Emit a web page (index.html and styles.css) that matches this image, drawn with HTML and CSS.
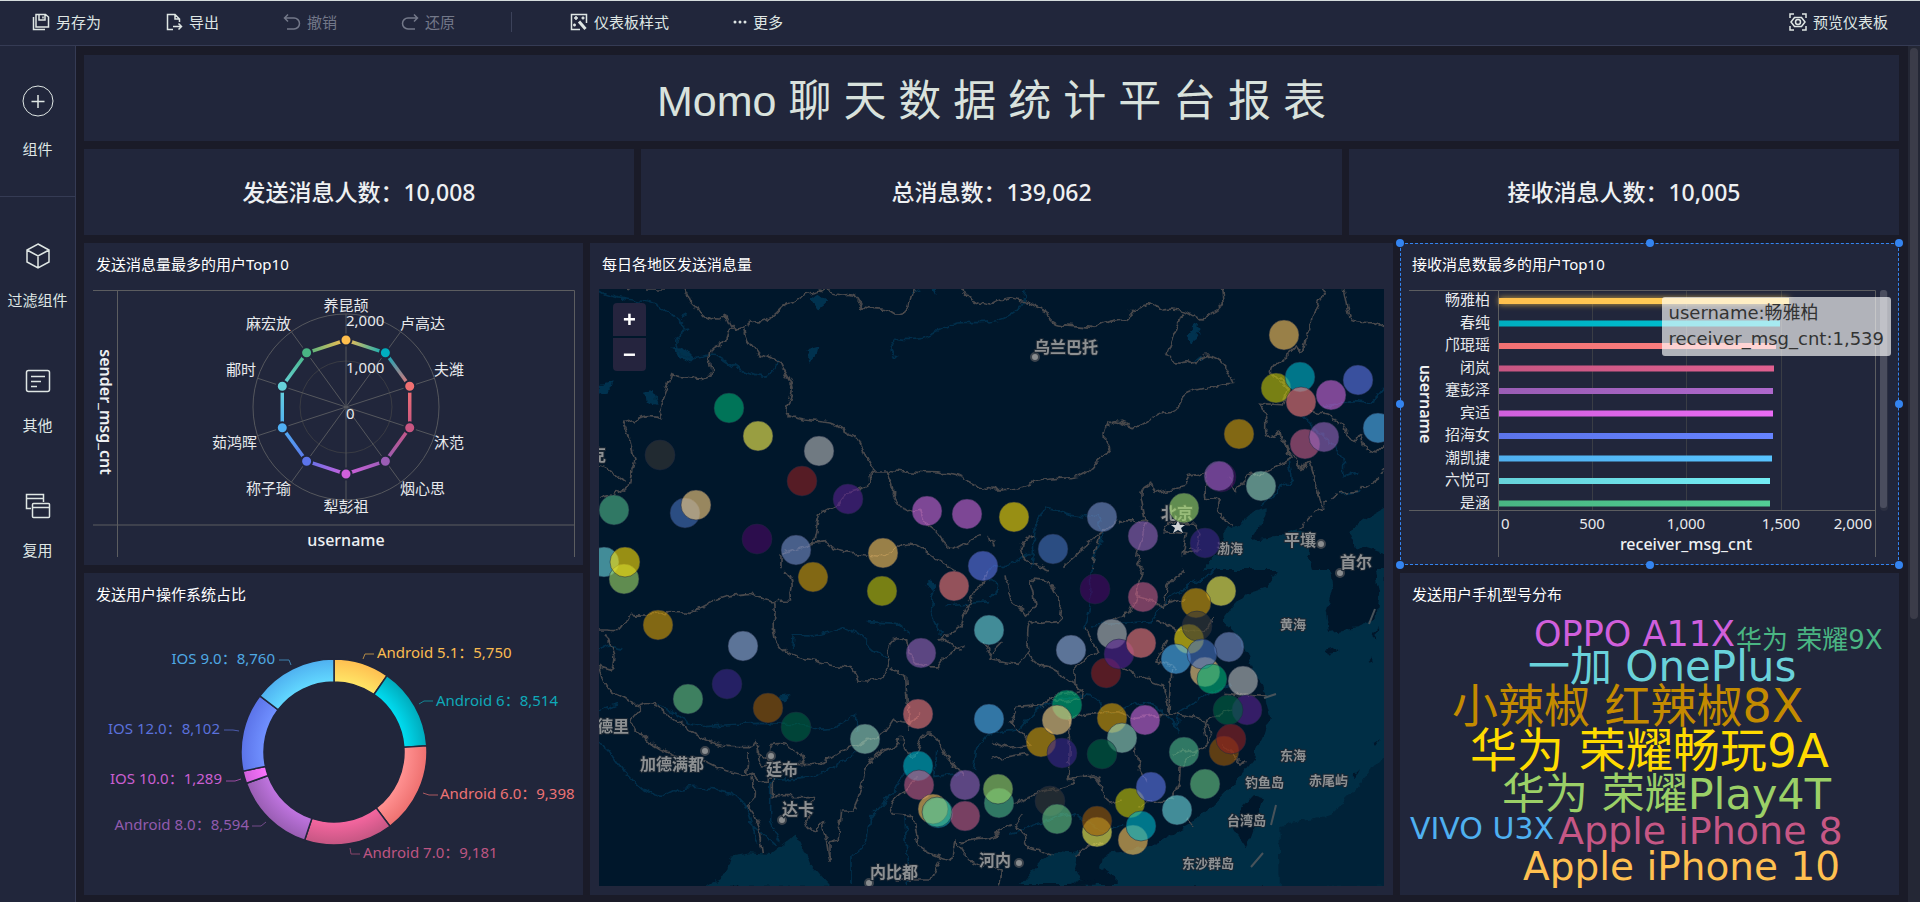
FILE: index.html
```html
<!DOCTYPE html>
<html lang="zh-CN">
<head>
<meta charset="utf-8">
<title>Momo 聊天数据统计平台报表</title>
<link rel="stylesheet" href="styles.css">
</head>
<body>
<div class="app">
  <header class="toolbar">
    <button class="tool"><svg class="tool-icon" viewBox="0 0 18 18"><path d="M4 1.500h9.500l3 2.500V14H4zM7 2v5h6V2M11 3.500v2M1.500 4v12.500H13"/></svg>另存为</button>
    <button class="tool"><svg class="tool-icon" viewBox="0 0 18 18"><path d="M8 16.500H2.500v-15H10l4.500 4.500v3M10 1.500V6h4M8 13.500h8M13.500 10.500l3 3-3 3"/></svg>导出</button>
    <button class="tool" disabled><svg class="tool-icon" viewBox="0 0 18 18"><path d="M5 1.500L1.500 5 5 8.500M1.500 5H11a5.500 5.500 0 0 1 0 11H4"/></svg>撤销</button>
    <button class="tool" disabled><svg class="tool-icon" viewBox="0 0 18 18"><path d="M13 1.500L16.500 5 13 8.500M16.500 5H7a5.500 5.500 0 0 0 0 11h7"/></svg>还原</button>
    <span class="tool-divider"></span>
    <button class="tool"><svg class="tool-icon" viewBox="0 0 18 18"><path d="M10 16.500H1.500v-15h15V10M6 3v4M4 5h4M13 3.500v3M11.500 5h3M4.500 10.500v3M3 12h3"/><path class="thick" d="M9 8.500l6.500 7.500"/></svg>仪表板样式</button>
    <button class="tool"><svg class="more-icon" viewBox="0 0 14 18"><circle cx="2" cy="9" r="1.500"/><circle cx="7" cy="9" r="1.500"/><circle cx="12" cy="9" r="1.500"/></svg>更多</button>
    <button class="tool tool-preview"><svg class="tool-icon" viewBox="0 0 18 18"><path d="M1 5V1h4M13 1h4v4M17 13v4h-4M5 17H1v-4M2 9l3.500-4.500h7L16 9l-3.500 4.500h-7z"/><circle cx="9" cy="9" r="2.500"/></svg>预览仪表板</button>
  </header>

  <div class="workspace">
    <nav class="sidebar">
      <button class="side side-main"><svg class="side-plus" viewBox="0 0 32 32"><circle cx="16" cy="16" r="15"/><path d="M16 10v13M9.500 16.500h13"/></svg>组件</button>
      <button class="side"><svg class="side-icon" viewBox="0 0 26 26"><path d="M13 1l11 6v12l-11 6-11-6V7zM2 7l11 6 11-6M13 13v12"/></svg>过滤组件</button>
      <button class="side"><svg class="side-icon" viewBox="0 0 26 26"><rect x="1.500" y="2.500" width="23" height="21" rx="2"/><path d="M6 8.500h14M6 13.500h10M6 18.500h6"/></svg>其他</button>
      <button class="side"><svg class="side-icon" viewBox="0 0 26 26"><path d="M6 15.500H1.500v-14h17V9M1.500 5.500h17"/><rect x="7.500" y="10.500" width="17" height="14" rx="1"/><path d="M7.500 14.500h17"/></svg>复用</button>
    </nav>

    <main class="canvas">
      <section class="card heading"><h1>Momo 聊 天 数 据 统 计 平 台 报 表</h1></section>

      <div class="stats">
        <section class="card stat stat-side">发送消息人数：10,008</section>
        <section class="card stat stat-mid">总消息数：139,062</section>
        <section class="card stat stat-side">接收消息人数：10,005</section>
      </div>

      <div class="charts">
        <div class="column">
          <section class="card">
            <h2>发送消息量最多的用户Top10</h2>
            <svg class="chart" viewBox="0 0 499 275">
              <g class="frame"><path d="M9 .5H490.500V267M33.500 .5V267M9 235H490"/></g>
              <g class="spokes" id="radar-grid"></g>
              <g id="radar-data"></g>
              <g class="label middle">
                <text x="262" y="21">养昆颉</text><text x="262" y="222">犁彭祖</text>
              </g>
              <g class="label">
                <text x="316" y="39">卢高达</text><text x="350" y="85">夫潍</text><text x="350" y="158">沐范</text><text x="316" y="204">烟心思</text>
                <text x="262" y="36">2,000</text><text x="262" y="83">1,000</text><text x="262" y="129">0</text>
              </g>
              <g class="label end">
                <text x="207" y="39">麻宏放</text><text x="172" y="85">郙时</text><text x="173" y="158">茹鸿晖</text><text x="207" y="204">称子瑜</text>
              </g>
              <text class="axis-name middle" x="262" y="256">username</text>
              <text class="axis-name strong middle" transform="translate(16 122) rotate(90)">sender_msg_cnt</text>
            </svg>
          </section>
          <section class="card">
            <h2>发送用户操作系统占比</h2>
            <svg class="chart" viewBox="0 0 499 275">
              <defs id="donut-fills"></defs>
              <g id="donut"></g>
              <g class="leaders">
                <path stroke="#b48a45" d="M279 39l2-5h9"/><path stroke="#138594" d="M335 84l5-3h9"/>
                <path stroke="#ac5961" d="M339 173l6 2h9"/><path stroke="#89446a" d="M266 228l1 6h9"/>
                <path stroke="#754b8b" d="M182 202l-5 4h-9"/><path stroke="#9b4ba2" d="M157 159l-6 2h-9"/>
                <path stroke="#4b5aac" d="M155 111l-6-1h-9"/><path stroke="#3f80ae" d="M207 45l-2-5h-10"/>
              </g>
              <g class="pie-label">
                <text x="293" y="38" fill="#fbbc50">Android 5.1：5,750</text>
                <text x="352" y="86" fill="#0fa9b8">Android 6：8,514</text>
                <text x="356" y="179" fill="#ed7375">Android 6.0：9,398</text>
                <text x="279" y="238" fill="#bd5582">Android 7.0：9,181</text>
              </g>
              <g class="pie-label end">
                <text x="165" y="210" fill="#925bae">Android 8.0：8,594</text>
                <text x="138" y="164" fill="#ca5fd2">IOS 10.0：1,289</text>
                <text x="136" y="114" fill="#5b71dc">IOS 12.0：8,102</text>
                <text x="191" y="44" fill="#4fa9e4">IOS 9.0：8,760</text>
              </g>
            </svg>
          </section>
        </div>

        <section class="card column-map">
          <h2>每日各地区发送消息量</h2>
          <div class="map">
            <svg class="map-view" viewBox="0 0 785 597" preserveAspectRatio="xMidYMid slice">
              <defs>
                <filter id="rough" filterUnits="userSpaceOnUse" x="-20" y="-20" width="830" height="640">
                  <feTurbulence type="fractalNoise" baseFrequency="0.09" numOctaves="3" seed="4"/>
                  <feDisplacementMap in="SourceGraphic" scale="9" xChannelSelector="R" yChannelSelector="G"/>
                </filter>
              </defs>
              <g filter="url(#rough)">
                <!-- north-west -->
                <g transform="translate(-9 -49) scale(.3333)">
                  <path class="lake" d="M660 175l20-15 35 25-30 25zM650 330l38-10-5 20-25 28zM238 330l30-5 50 25-15 15zM25 435l40-8-8 25-30 10zM165 455l20-5 15 45-30-10zM1020 140h25l-10 30z"/>
                  <path class="river" d="M25 150c60 40 120 20 170 45s60 35 100 70c-40 25-45 40-30 70 40 30 60 15 90 10 50 0 60 40 120 55 60 25 70 10 90-40M270 235l20-10M1200 245c-60 10-90-10-140 20-60 30-70 40-140 30-25 10-30 50 5 53M960 160l25-10"/>
                  <path class="border" d="M100 140l20 5M165 150h60M275 140c25 20 10 45 50 65 20 35 40 35 60 35l25-15c10 25 15 35 30 45 60-10 20-25 70-25 60-15 50-45 100-60 30-20 60-30 80-35l60 15c40-5 50 0 65 35 50 15 60-5 100 25 50 0 40-45 55-75M1115 140c10 50 50 50 85 55M430 268c-30-10-15 40-45 45-50 15-15 60-25 95-20 5-10 15-40 8-50-10-50 0-75-15l-40 110 15 25c-50-15-70 0-120 15 25 40 20 75 35 110-20 50-10 70-20 75-60 45-50 15-85 40M25 680c40 10 50 25 80 45M460 265c10 50 20 40 40 75 50 20 40 10 70 30 20 50 50 60 30 110-30 50 0 50 40 60 80 10 80 0 125 35l40 20c20 35 20 70 45 95h40c60 10 100 5 160 10 80 0 80 50 190 50M850 690c-30 10 5 40-20 50-50 15-60 10-85 50l-55 30c-10 30-10 60-20 90l-100 35v40M890 690c10 30 25 50 20 80l30 45 50-10 20 50c50 30 40 60 85 75l80-45M670 910l35-5c50 45 100 35 170 45l50-30c40-20 60 0 100 30l70 40"/>
                </g>
                <!-- south-west -->
                <g transform="translate(-9 281) scale(.3333)">
                  <path class="sea" d="M345 950l55-30 20-60 60-10 60 5 70-55 25 15 25 65 65 70z"/>
                  <path class="lake" d="M1000 40l20-12 25 22-15 12zM570 380l35-5-20 20z"/>
                  <path class="river" d="M25 250c30-40 40-20 70-15M25 425l60-25M200 405c80 20 60 60 150 65 80-10 100-5 150-10l150 5c70 25 110-5 150-30v50M605 240l5-45c90 10 100-10 150-25 60 20 60 50 135 100M830 155l90 5 40 30M1040 60c-30 40-20 90 20 130M1200 95l-130 10M25 520c60 20 80 150 200 160 80-50 120-20 200-10 50 20 60 80 75 150M545 630v130l30 60M550 630c70-10 130 10 240-80M480 760l80 70M950 600c-30 60-70 100-110 140-10 60 0 90-60 120v80M945 740l10 200M1040 540l-5 80 80-10M1150 600l10-60 40-50"/>
                  <path class="border" d="M25 180h30c50 10 40-20 65-50 60 10 80-10 180 0 100-50 80-50 180-60l70 25c10 40-10 50 5 110 30 70 100 60 140 75 60 20 90-10 110 50 60 10 80 0 95-55-20-60 20-90 50-60 10 60 40 80 95 75l30-40 50-20M605 95c-10-30 20-50-20-90M540 95l65-2M45 190c20 40 40 80 15 110l-30-10c20 80 30 70 70 90 40 20 30 40 50 30 40-20 60 10 90 30 60 40 120 90 190 90h50l20-12c10 60 30 70 150 65 70 10 90-50 150-55 80-50 60 0 110-80 60 30 60-5 80-20M150 415l-35 40c60 60 90 90 160 110 80-10 90 40 195 50l15-5c30 30 40 20 65 20v50h120l-20 75c20 60 40 0 50 0l20 120v-60l25-5 10-90h35c40-80 20-100 50-150 40-40 90-30 85-60M475 540l-5 70M485 610c-10 60 40 50-15 95 40 40 40 80 50 145M505 540c0 60 10 50 30 45l5-60c40-10 60 0 85 20l25 45M930 500c10 40 25 70 50 50 20-100 60-60 80 0l60 70M960 480l-10-160-45-30M980 620c-20 50-100 50-70 115l60 5 15 85c50 40 60 30 100 45l10-60c40 60 40 70 90 80M1050 870l-30 60h-100M1200 0l-60 90-35 90-50 20 60 50M1110 815l90-15"/>
                </g>
                <!-- north-east -->
                <g transform="translate(391 -49) scale(.3333)">
                  <path class="sea" d="M790 815l40-10v20l-50 75 80-10 60-25 40 35-5 40 15 50H635l30-35 35-20v-55l45-25zM1190 800l-60 35-55 40 15 40 100 30z"/>
                  <path class="lake" d="M590 290l30-38 12 15-28 44zM610 365l20-15 5 12z"/>
                  <path class="river" d="M105 148c0 60-50 90-105 98M120 990c30-80-20-120 50-185 60 10 80 30 150 20l20 60-40 100M0 990l125-50M1190 440c-50 60-50 50-100 45l-90 20M940 530l60 60c80 60 50 80 60 120l45-15M1055 760l60-10M900 650c-20 30 30 70-20 85l-70 65"/>
                  <path class="border" d="M0 195c80-50 110 0 170 20 20 60 60 30 140 50 70-40 90-10 120-55 60-30 50-20 90 0 60-10 70 10 110 30 60-30 60-30 70-50l-5-40 15-10M578 218l-50 125c30 50 60 0 90 30 30-50 90-20 110 60-70 5-80 10-120 20-60 10-20 60-75 65-40 0-50 30-100 45-40-10-80-50-90 20-10 40 60 30-20 80-50 70-80 40-180 60-50 20-70 30-140 25M1000 148c-20 80-40 50-35 120-30 10-10 60-35 70l-15-20c-10 30-80 50-70 80l50 50-15 50-70-5c30 40 10 70 20 100l40-15 30 80-60 30c-70 20-60 10-105 70l-20-50M1060 148c20 80 0 100 80 100l45 20M960 510c40 15 50 0 70 30 50 10 20 60 70 65 30-60 10 50 50 35l35-30M905 650l25 35 30-20 25 85 10 55M900 650l-15-50M595 710l50-10 5 75 40 5-10 30 45 50M595 710l-15 30-85 20-10-30c-50 20-30 40-20 110-60 10-70-10-80 15M520 860c30-30 60-10 90-10l20 30-10 50-40 10 10-60-70-5zM470 840l-30 110 20 40M600 920l30 15M380 840l-60 50-100 90M0 890l10 30M130 890c-60 20-30 60-10 75l60 25"/>
                  <path class="border dashed" d="M1185 690l-20 25-60 35-60 10c-30 20-60 60-80 70l-40 40M330 890l-30 100"/>
                </g>
                <!-- south-east -->
                <g transform="translate(391 281) scale(.3333)">
                  <path class="sea" d="M850 20l-20 30-60 20-40 40-30 40 35 35 35 65 20 60 30 35 10 60 10 40-20 60-30 60-30 40-40 50-60 60-60 50-60 35-60 30-80 15-40 5-25 15-5 30 50 30v20H90l60-70 50-30 45 5 20-5-10 55 30 55H1190V0H860z"/>
                  <path class="deep" d="M865 765l150-25 80-80 95-120v410H870z"/>
                  <path class="land" d="M1020 0l10 60-20 60 10 65 80-10 60-40 10-70-15-70zM795 672l25 8-8 40-42 115-35-55 15-60zM235 945l30-15 55 10v10h-85zM1010 240l30-8 5 12-28 10zM1130 285l20-20v15zM1150 520l20-12-15 20zM1085 620l25-25-15 28zM1150 195l12-25-3 35z"/>
                  <path class="river" d="M0 80c30-20 30-40 0-50M285 180c20-80 20-100 15-180M310 165l170-10 60-70 140-85M0 490l90-15c60-80 110-80 180-100 50-5 60 20 80 60 80-20 90-60 150-20l60 50 10-40 60-40 90-40M545 450l25 40M60 790l180-60 100 50 60-10"/>
                  <path class="border" d="M45 10l20 90 45 35 25-30-15-75 60 5 30 60-5 60-50 5c-50-20-50 20-40 90l-30 30-80-10-20-50M110 250c60 60 40 20 100 60 30 40 70 40 70 70-60 20-80 20-100 0l-20 30-80 5-20 40 40 40 20 30-60 10-60-20M180 380l100-20M290 175l30 70-65 45v60M460 0l-20 80-20 50-55 15M580 0c-30 30-60 50-60 110l60-25M440 80l60 15 20 25M390 295c60 20 70 30 130 50l20 85-100 15-60-20-140 20-5 180 80-10c30 20 0 60 50 85l30-10M545 300l-5 130 100 20 10 70-80 70c0 60-10 60-25 100l-100 15M435 530l10 60 25 40M500 150l60 35 90-10 20-30M530 210l-30 60 60 30M645 450l80-30M700 370l130 10M640 450c40 40 30 60-20 90l-70 10M240 620l10 20-100 30-80 30M0 570l110-20M70 770l30-40M70 770c60 20 20 60 60 65l60 20M0 800l60-30M260 860l30-30 50-10M0 890l40 20-10 40M700 520l60 60M590 740l25 35M0 250l40-40"/>
                </g>
              </g>
              <g class="limits"><path d="M770 335l6-15M665 409l12-4M672 536l5-20M652 578l12-14"/></g>
              <g class="towns"><circle cx="436" cy="68" r="4"/><circle cx="722" cy="255" r="4"/><circle cx="741" cy="284" r="4"/><circle cx="106" cy="462" r="4"/><circle cx="172" cy="467" r="4"/><circle cx="183" cy="531" r="4"/><circle cx="270" cy="594" r="4"/><circle cx="420" cy="574" r="4"/></g>
              <g class="place">
                <text x="435" y="64">乌兰巴托</text><text x="562" y="230">北京</text><text x="685" y="257">平壤</text><text x="741" y="279">首尔</text>
                <text x="-9" y="172">克</text><text x="-2" y="443">德里</text><text x="41" y="481">加德满都</text><text x="167" y="486">廷布</text><text x="183" y="526">达卡</text><text x="271" y="589">内比都</text><text x="380" y="577">河内</text>
              </g>
              <g class="place small">
                <text x="618" y="264">渤海</text><text x="681" y="340">黄海</text><text x="681" y="471">东海</text><text x="646" y="498">钓鱼岛</text><text x="710" y="496">赤尾屿</text><text x="628" y="536">台湾岛</text>
                <text x="583" y="579">东沙群岛</text>
              </g>
              <path class="capital" d="M579 231l2 5h5l-4 3 2 5-5-3-5 3 2-5-4-3h5z"/>
              <g id="bubbles"></g>
            </svg>
            <div class="zoom">
              <button class="zoom-in" aria-label="放大">+</button>
              <button class="zoom-out" aria-label="缩小">−</button>
            </div>
          </div>
        </section>

        <div class="column">
          <section class="card selected">
            <h2>接收消息数最多的用户Top10</h2>
            <svg class="chart" viewBox="0 0 499 275">
              <defs>
                <filter id="glow" x="-5%" y="-200%" width="110%" height="500%"><feDropShadow dx="0" dy="0" stdDeviation="3" flood-color="#ffc94d" flood-opacity=".8"/></filter>
              </defs>
              <path class="grid" d="M192.500 1v219M286.500 1v219M381.500 1v219"/>
              <g class="frame"><path d="M9 .5H475.500V267M98.500 .5V267M9 220.500H475"/></g>
              <g id="bars"></g>
              <g class="label middle"><text x="192" y="239">500</text><text x="286" y="239">1,000</text><text x="381" y="239">1,500</text></g>
              <text class="label" x="101" y="239">0</text>
              <text class="label end" x="472" y="239">2,000</text>
              <text class="axis-name middle" x="286" y="260">receiver_msg_cnt</text>
              <text class="axis-name strong middle" transform="translate(20 114) rotate(90)">username</text>
              <rect class="scroll-track" x="480" y="0" width="8" height="221" rx="4"/>
              <rect class="scroll-thumb" x="480" y="0" width="7" height="218" rx="3"/>
            </svg>
            <div class="tooltip"><div>username:畅雅柏</div><div>receiver_msg_cnt:1,539</div></div>
            <i class="handle top left"></i><i class="handle top center"></i><i class="handle top right"></i>
            <i class="handle middle-row left"></i><i class="handle middle-row right"></i>
            <i class="handle bottom left"></i><i class="handle bottom center"></i><i class="handle bottom right"></i>
          </section>
          <section class="card">
            <h2>发送用户手机型号分布</h2>
            <svg class="chart cloud" viewBox="0 0 499 275">
              <text x="134" y="26" font-size="35" fill="#d05fdc">OPPO A11X</text>
              <text x="336" y="29" font-size="26" fill="#4ab583">华为 荣耀9X</text>
              <text x="128" y="61" font-size="42" fill="#6ad2da">一加 OnePlus</text>
              <text x="52" y="102" font-size="46" fill="#c48b00">小辣椒 红辣椒8X</text>
              <text x="70" y="147" font-size="47" fill="#ffdb00">华为 荣耀畅玩9A</text>
              <text x="102" y="189" font-size="43" fill="#9bd067">华为 荣耀Play4T</text>
              <text x="10" y="219" font-size="30" fill="#4fb0f0">VIVO U3X</text>
              <text x="158" y="224" font-size="38" fill="#c65785">Apple iPhone 8</text>
              <text x="123" y="260" font-size="39" fill="#ffc050">Apple iPhone 10</text>
            </svg>
          </section>
        </div>
      </div>
    </main>
    <div class="page-scroll"><div class="page-scroll-thumb"></div></div>
  </div>
</div>
<script src="charts.js"></script>
</body>
</html>
```
FILE: styles.css
```css
* { box-sizing: border-box; }

body {
  margin: 0;
  background: #1a1b28;
  color: #dfe6e4;
  font: 15px/22px "Noto Sans", "Noto Sans CJK SC", sans-serif;
}

button {
  border: 0;
  background: none;
  color: inherit;
  font: inherit;
  cursor: pointer;
}

.app {
  display: flex;
  flex-direction: column;
  height: 100vh;
  overflow: hidden;
}

/* Toolbar */
.toolbar {
  display: flex;
  align-items: center;
  flex: none;
  height: 46px;
  padding-bottom: 2px;
  border-top: 1px solid #d5dcdc;
  border-bottom: 1px solid #353b54;
  background: #21263b;
}

.tool {
  display: flex;
  align-items: center;
  gap: 6px;
  padding: 0 32px;
  white-space: nowrap;
}

.tool:disabled { color: #737889; }
.tool-preview { margin-left: auto; }

.tool-icon,
.side-icon,
.side-plus {
  fill: none;
  stroke: currentColor;
  stroke-width: 1.5;
}

.tool-icon { width: 18px; height: 18px; }
.tool-icon .thick { stroke-width: 3; }
.more-icon { width: 14px; height: 18px; fill: currentColor; }

.tool-divider {
  width: 1px;
  height: 20px;
  margin: 0 26px 0 24px;
  background: #3c425a;
}

/* Sidebar */
.workspace { display: flex; flex: 1; min-height: 0; }

.sidebar {
  flex: none;
  width: 76px;
  border-right: 1px solid #353b54;
  background: #21263b;
}

.side {
  display: flex;
  flex-direction: column;
  align-items: center;
  gap: 20px;
  width: 100%;
  padding: 46px 0 11px;
  white-space: nowrap;
}

.side-main {
  gap: 21px;
  padding: 39px 0 36px;
  border-bottom: 1px solid #353b54;
}

.side-icon { width: 26px; height: 26px; }
.side-plus { width: 32px; height: 32px; stroke-width: 1; }
.side-plus path { stroke-width: 1.5; }

/* Canvas */
.canvas {
  display: flex;
  flex: 1;
  flex-direction: column;
  gap: 8px;
  min-width: 0;
  padding: 9px 9px 7px 8px;
}

.card { position: relative; background: #21263b; }

.heading {
  display: flex;
  align-items: center;
  justify-content: center;
  flex: none;
  height: 86px;
  padding-top: 6px;
}

.heading h1 {
  margin: 0;
  color: #d9e2dd;
  font: 400 43px/60px "Liberation Sans", "Noto Sans CJK SC", sans-serif;
}

.stats { display: flex; flex: none; gap: 7px; height: 86px; }

.stat {
  display: flex;
  align-items: center;
  justify-content: center;
  color: #eef0f2;
  font-size: 23px;
  font-weight: 500;
}

.stat-side { flex: 550 1 0; }
.stat-mid { flex: 701 1 0; }

.charts {
  display: grid;
  flex: 1;
  grid-template-columns: 499fr 803fr 499fr;
  gap: 7px;
  min-height: 0;
}

.column {
  display: grid;
  grid-template-rows: 1fr 1fr;
  gap: 8px;
  min-width: 0;
  min-height: 0;
}

.column-map {
  display: flex;
  flex-direction: column;
  min-width: 0;
  min-height: 0;
  padding: 0 9px 9px;
}

.column .card {
  display: flex;
  flex-direction: column;
  min-height: 0;
}

h2 {
  flex: none;
  height: 47px;
  margin: 0;
  padding: 10px 12px;
  color: #fff;
  font-size: 15px;
  font-weight: 400;
  line-height: 22px;
}

.column-map h2 { height: 46px; padding: 10px 3px; }

.chart { display: block; flex: 1; width: 100%; min-height: 0; }

/* Chart parts */
.label { fill: #e8eaed; font-size: 15px; }
.pie-label { font-size: 15px; }
.middle { text-anchor: middle; }
.end { text-anchor: end; }
.axis-name { fill: #eef0f2; font-size: 16px; font-weight: 500; }
.axis-name.strong { font-weight: 600; }
.frame { fill: none; stroke: #5c5d60; }
.grid { fill: none; stroke: #3a3d45; }
.spokes { fill: none; stroke: #55575d; }
.leaders { fill: none; }
.scroll-track { fill: #2c3042; }
.scroll-thumb { fill: #4a4d5e; }
.cloud { font-family: "DejaVu Sans", "Noto Sans CJK SC", sans-serif; }

/* Map */
.map { position: relative; flex: 1; min-height: 0; background: #00172b; }
.map-view { display: block; width: 100%; height: 100%; }
.sea { fill: #002e45; }
.deep { fill: #002337; }
.land { fill: #00172b; }
.lake { fill: #003350; }
.river { fill: none; stroke: #002f4b; stroke-width: 5; }
.border { fill: none; stroke: #48484c; stroke-width: 5; }
.border.dashed { stroke-dasharray: 24 9; }
.limits { fill: none; stroke: #48535a; stroke-width: 2; }
.towns { fill: #8a8d8f; stroke: #3b434c; stroke-width: 2; }
.capital { fill: #d0d3d5; }

.place {
  fill: #8d9092;
  stroke: #1b2733;
  stroke-width: 2px;
  paint-order: stroke;
  font: 700 16px "Noto Sans CJK SC", sans-serif;
}

.place.small { font-size: 13px; }

.zoom {
  position: absolute;
  top: 14px;
  left: 14px;
  display: grid;
  gap: 2px;
}

.zoom button {
  width: 33px;
  height: 33px;
  padding: 0;
  background: #25243e;
  color: #fff;
  font: 700 22px/30px "Liberation Sans", sans-serif;
}

.zoom-in { border-radius: 4px 4px 0 0; }
.zoom-out { border-radius: 0 0 4px 4px; }

/* Selected card */
.selected { outline: 1px dashed #3484f0; outline-offset: -1px; }

.handle {
  position: absolute;
  width: 8px;
  height: 8px;
  border-radius: 50%;
  background: #3484f0;
}

.handle.top { top: -4px; }
.handle.bottom { bottom: -4px; }
.handle.middle-row { top: calc(50% - 4px); }
.handle.left { left: -4px; }
.handle.center { left: calc(50% - 4px); }
.handle.right { right: -4px; }

.tooltip {
  position: absolute;
  top: 54px;
  right: 8px;
  padding: 3px 7px 4px;
  border-radius: 3px;
  background: rgba(255, 255, 255, .65);
  color: #333;
  font: 18px/26px "DejaVu Sans", "Noto Sans CJK SC", sans-serif;
  white-space: nowrap;
}

/* Page scrollbar */
.page-scroll { flex: none; width: 12px; padding: 2px; background: #242735; }
.page-scroll-thumb { height: 67%; border-radius: 4px; background: #3b3c49; }
```
FILE: charts.js
```js
const NS = 'http://www.w3.org/2000/svg';

function add(parent, tag, attrs, text) {
  const node = document.createElementNS(NS, tag);
  for (const key in attrs) node.setAttribute(key, attrs[key]);
  if (text) node.textContent = text;
  parent.appendChild(node);
  return node;
}

const byId = id => document.getElementById(id);
const polar = (cx, cy, r, a) => [cx + r * Math.sin(a), cy - r * Math.cos(a)];

// Radar: ten users, outer ring is 2,000
const radarColors = ['#ffbe4d', '#00aebf', '#f17072', '#c85682', '#9a5db5', '#d060dc', '#5c74ea', '#50b0f4', '#66d2da', '#49b583'];
const cx = 262, cy = 117;
const grid = byId('radar-grid');
add(grid, 'circle', { cx, cy, r: 93 });
add(grid, 'circle', { cx, cy, r: 46, stroke: '#3a3c44' });
const points = radarColors.map((c, i) => {
  const a = i * Math.PI / 5;
  const [x, y] = polar(cx, cy, 93, a);
  add(grid, 'line', { x1: cx, y1: cy, x2: x, y2: y });
  return polar(cx, cy, 67, a);
});
const radar = byId('radar-data');
points.forEach(([x, y], i) => {
  const j = (i + 1) % 10, [x2, y2] = points[j];
  const g = add(radar, 'linearGradient', { id: 'edge' + i, gradientUnits: 'userSpaceOnUse', x1: x, y1: y, x2, y2 });
  add(g, 'stop', { offset: 0, 'stop-color': radarColors[i] });
  add(g, 'stop', { offset: 1, 'stop-color': radarColors[j] });
  add(radar, 'line', { x1: x, y1: y, x2, y2, stroke: `url(#edge${i})`, 'stroke-width': 3.5 });
});
points.forEach(([x, y], i) => add(radar, 'circle', { cx: x, cy: y, r: 5.5, fill: radarColors[i], stroke: '#21263b', 'stroke-width': 2 }));

// Donut: [value, inner colour, outer colour]
const systems = [
  [5750, '#ffe566', '#ffbe50'], [8514, '#00dcf0', '#00aabb'], [9398, '#ff9191', '#ee706f'], [9181, '#f5669f', '#c45682'],
  [8594, '#bf74df', '#985db2'], [1289, '#fb73ff', '#d060da'], [8102, '#7090ff', '#5b73e8'], [8760, '#62d8ff', '#4fb0f0']
];
const total = systems.reduce((sum, s) => sum + s[0], 0);
let angle = 0;
systems.forEach(([value, inner, outer], i) => {
  const next = angle + value / total * 2 * Math.PI;
  const g = add(byId('donut-fills'), 'radialGradient', { id: 'os' + i, gradientUnits: 'userSpaceOnUse', cx: 250, cy: 132, r: 93 });
  add(g, 'stop', { offset: .76, 'stop-color': inner });
  add(g, 'stop', { offset: 1, 'stop-color': outer });
  const p = (r, a) => polar(250, 132, r, a).map(n => n.toFixed(2)).join(' ');
  add(byId('donut'), 'path', {
    d: `M${p(93, angle)}A93 93 0 0 1 ${p(93, next)}L${p(70, next)}A70 70 0 0 0 ${p(70, angle)}Z`,
    fill: `url(#os${i})`, stroke: '#21263b', 'stroke-width': 1.5
  });
  angle = next;
});

// Bars: [user, bar length, start colour, end colour]
const users = [
  ['畅雅柏', 290, '#ffc04e', '#ffd35a'], ['春纯', 281, '#00aebf', '#00c4d6'], ['邝琨瑶', 277, '#f17072', '#ff8585'],
  ['闭岚', 275, '#c85682', '#e06090'], ['蹇彭泽', 274, '#9a5db5', '#ae68cc'], ['宾适', 274, '#d060dc', '#e96bf4'],
  ['招海女', 274, '#5c74ea', '#6683ff'], ['潮凯捷', 273, '#50b0f0', '#58c3ff'], ['六悦可', 271, '#66d2da', '#73ecf4'], ['是涵', 271, '#49b583', '#52cd95']
];
const bars = byId('bars');
users.forEach(([name, width, from, to], i) => {
  const y = 11 + i * 22.5;
  const g = add(bars, 'linearGradient', { id: 'bar' + i });
  add(g, 'stop', { offset: 0, 'stop-color': from });
  add(g, 'stop', { offset: 1, 'stop-color': to });
  const rect = add(bars, 'rect', { x: 99, y: y - 3, width, height: 6, fill: `url(#bar${i})` });
  if (i === 0) rect.setAttribute('filter', 'url(#glow)');
  add(bars, 'text', { class: 'label end', x: 90, y: y + 4 }, name);
});

// Map bubbles by colour: positions in map units
const bubbles = {
  '#00b277': [[130, 119], [468, 416]],
  '#fff850': [[159, 147], [622, 302], [498, 543]],
  '#50b98a': [[15, 221], [585, 463], [400, 514]],
  '#373736': [[61, 166], [451, 512]],
  '#bbbcbc': [[220, 162], [513, 345], [644, 392]],
  '#8f2022': [[203, 192], [507, 384]],
  '#582190': [[249, 210], [520, 365], [648, 421]],
  '#4871bc': [[86, 224], [454, 260]],
  '#c8c605': [[677, 99], [283, 302], [531, 514]],
  '#d068dc': [[328, 222], [368, 225], [732, 106], [546, 431]],
  '#490764': [[158, 250], [496, 300], [622, 188]],
  '#7890c9': [[197, 261], [503, 228], [630, 358]],
  '#d89e05': [[214, 288], [640, 145], [59, 336], [597, 314], [513, 429], [442, 453]],
  '#5f76eb': [[384, 277], [759, 91], [552, 498]],
  '#6edae1': [[5, 273], [390, 341], [578, 521]],
  '#a0da69': [[25, 290], [585, 219], [399, 500]],
  '#fddf05': [[26, 273], [415, 228], [590, 350]],
  '#00b5c9': [[701, 88], [319, 477], [339, 524]],
  '#f77a7c': [[702, 113], [355, 297], [319, 425], [542, 354]],
  '#53b5f6': [[779, 139], [390, 430], [577, 370]],
  '#c85b87': [[706, 155], [544, 308], [320, 496], [366, 527]],
  '#9965bc': [[725, 148], [620, 187], [544, 247], [322, 364], [366, 496]],
  '#99d7bf': [[662, 197], [266, 450], [523, 449]],
  '#3e268a': [[606, 254], [128, 395], [463, 464]],
  '#67c683': [[89, 410], [458, 530], [606, 495]],
  '#9d5805': [[169, 419], [625, 462], [498, 532]],
  '#006241': [[197, 438], [629, 421], [503, 465]],
  '#99b2e1': [[144, 357], [472, 361]],
  '#fdd282': [[97, 216], [458, 431], [606, 383]],
  '#ffc65b': [[685, 46], [284, 264], [334, 520], [534, 551]]
};
// Bubbles that lie over their neighbours
const raised = [['#373736', 598, 337], ['#4871bc', 603, 365], ['#00b277', 613, 390], ['#8f2022', 632, 450], ['#00b5c9', 542, 537], ['#50b98a', 338, 523]];
const layer = byId('bubbles');
const bubble = (x, y, fill) => add(layer, 'circle', { cx: x, cy: y, r: 15, fill, 'fill-opacity': .6, stroke: '#1c2740', 'stroke-opacity': .5 });
for (const fill in bubbles) bubbles[fill].forEach(([x, y]) => bubble(x, y, fill));
raised.forEach(([fill, x, y]) => bubble(x, y, fill));
```
